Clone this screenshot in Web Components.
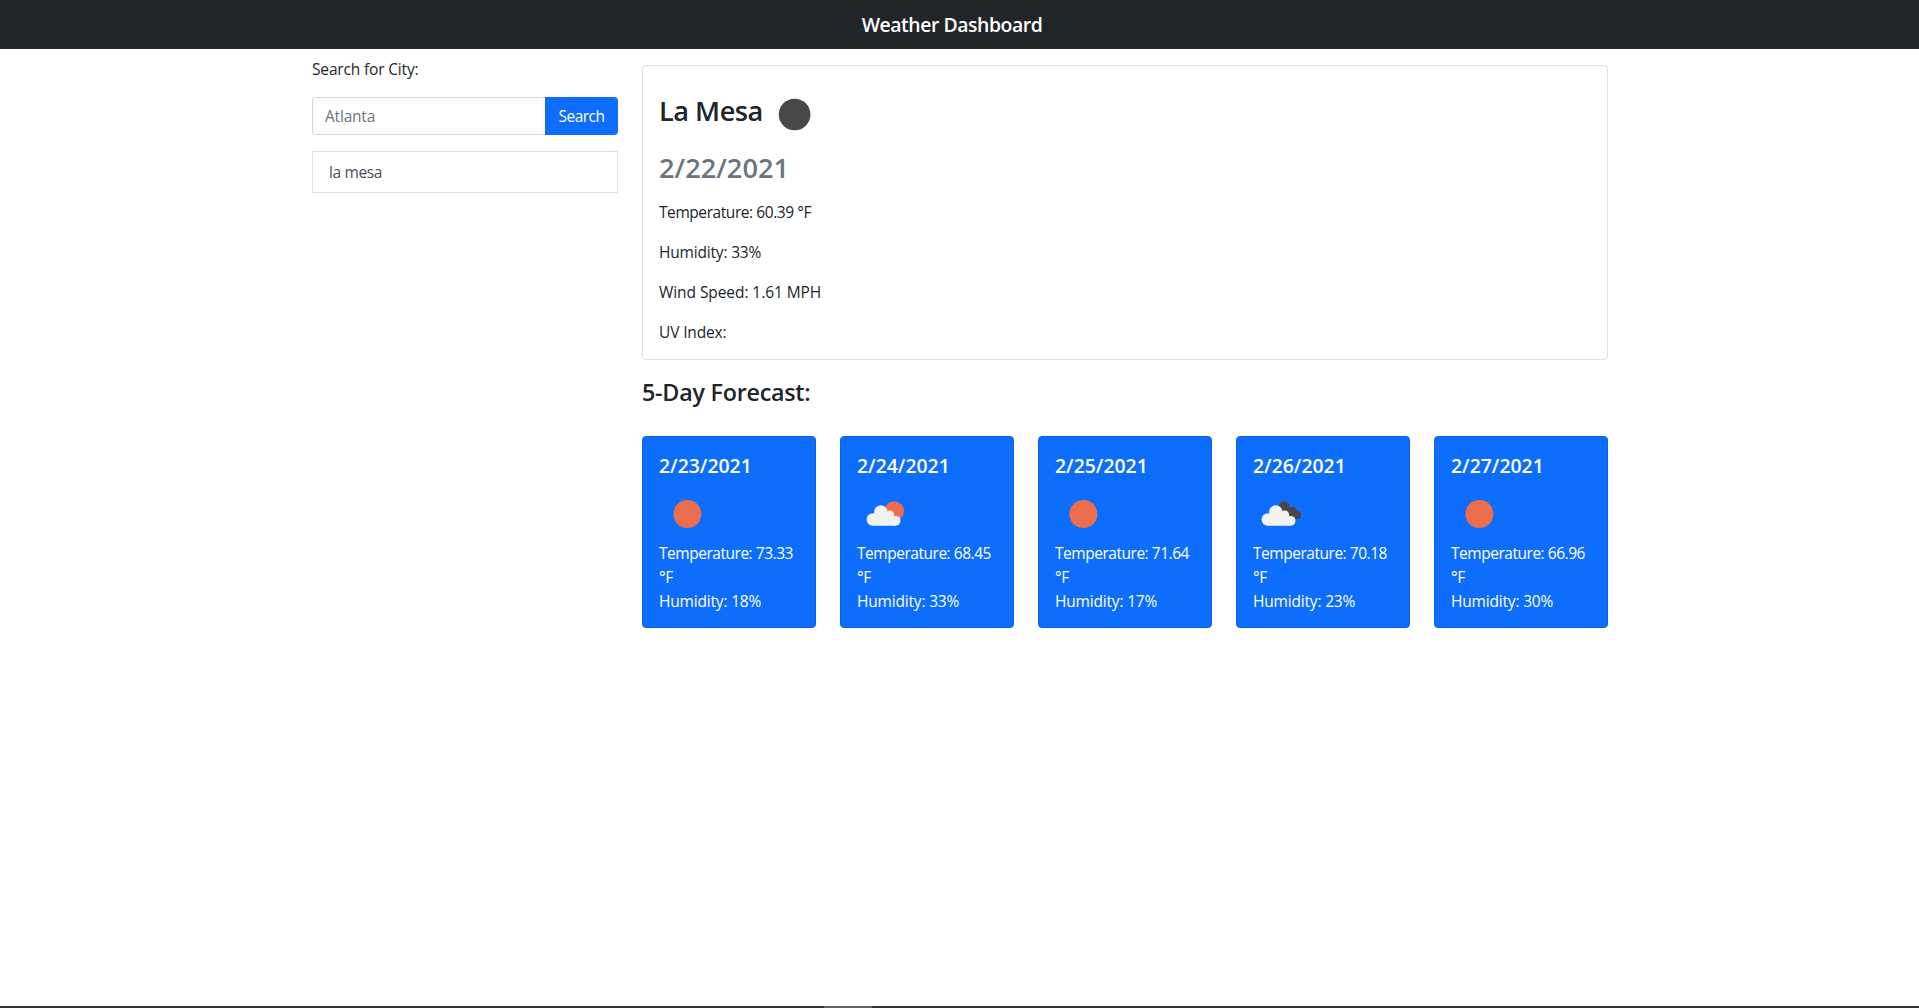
<!DOCTYPE html>
<html lang="en">
<head>
<meta charset="utf-8">
<title>Weather Dashboard</title>
<style>
  html, body { margin: 0; height: 100%; background: #fff; overflow: hidden; }
  body { font: 15.5px/24px "Open Sans", "Noto Sans", sans-serif; color: #212529; }
</style>
</head>
<body>
<weather-app></weather-app>
<script>
const define = (name, render) => customElements.define(name, class extends HTMLElement {
  connectedCallback() {
    if (this.shadowRoot) return;
    this.attachShadow({ mode: 'open' }).innerHTML = '<style>*{box-sizing:border-box}</style>' + render(this);
  }
});

const CLOUD = `<g fill="#f2f2f1"><circle cx="16.2" cy="30.5" r="6.2"/><circle cx="24.2" cy="23" r="6.7"/><circle cx="33.2" cy="25.8" r="4.4"/><circle cx="39" cy="31.8" r="4.9"/><path d="M16.2 36.7V27l3-3h14l6 5v7.7z"/></g>`;
const ICONS = {
  moon: `<circle cx="25" cy="25.5" r="15.8" fill="#48484a"/>`,
  sun: `<circle cx="28.8" cy="25" r="14" fill="#ec6e4c"/>`,
  'few-clouds': `<circle cx="37.6" cy="22.1" r="9.8" fill="#ec6e4c"/>${CLOUD}`,
  'broken-clouds': `<g transform="translate(-1)"><g fill="#48484a"><circle cx="32.8" cy="17.9" r="5.6"/><circle cx="41" cy="21.9" r="4.1"/><circle cx="45.7" cy="26.1" r="4.1"/><path d="M32 18l9 3 4 9h-4L30 22z"/></g>${CLOUD}</g>`
};

define('weather-icon', el => `
  <style>:host{display:block;width:50px;height:50px;flex:none} svg{display:block}</style>
  <svg width="50" height="50" viewBox=".4 0 50 50" aria-hidden="true">${ICONS[el.getAttribute('name')]}</svg>`);

define('app-header', () => `
  <style>
    :host{display:flex;height:49px;background:#212529;color:#fff;justify-content:center;align-items:center;padding-right:15px;padding-top:1px}
    h1{margin:0;font-size:19.4px;line-height:24px;font-weight:600;letter-spacing:-.44px}
  </style>
  <h1><slot></slot></h1>`);

define('city-search', () => `
  <style>
    :host{display:block;padding-top:8px}
    label{display:block;margin-bottom:16px;letter-spacing:-.16px}
    .group{display:flex;height:38px}
    .field{flex:1;border:1px solid #ced4da;border-right:0;border-radius:4px 0 0 4px;padding:6px 12px;line-height:24px;color:#6c757d;letter-spacing:-.2px}
    button{width:73px;padding:0;border:0;border-radius:0 4px 4px 0;background:#0d6efd;color:#fff;font:inherit;letter-spacing:-.55px}
  </style>
  <label>Search for City:</label>
  <div class="group"><div class="field">Atlanta</div><button>Search</button></div>
  <slot></slot>`);

define('history-item', () => `
  <style>:host{display:block;box-sizing:border-box;margin-top:16px;height:42px;border:1px solid #dfdfdf;padding:8px 16px;color:#495057;letter-spacing:-.38px}</style>
  <slot></slot>`);

define('current-weather', () => `
  <style>
    :host{display:block;box-sizing:border-box;height:295px;border:1px solid #dfdfdf;border-radius:4px;padding:16px}
    .city{display:flex;align-items:center;height:64px;margin-bottom:5px}
    h3{margin:0;font-size:27.2px;line-height:34px;font-weight:600}
    .city h3{letter-spacing:-.5px;margin-top:-7px}
    weather-icon{margin-left:7px}
    .date{color:#6c757d;margin-bottom:15px}
    p{margin:0 0 16px}
  </style>
  <div class="city"><h3>La Mesa</h3><weather-icon name="moon"></weather-icon></div>
  <h3 class="date">2/22/2021</h3>
  <p style="letter-spacing:-.43px">Temperature: 60.39 °F</p>
  <p style="letter-spacing:-.18px">Humidity: 33%</p>
  <p style="letter-spacing:-.07px">Wind Speed: 1.61 MPH</p>
  <p style="letter-spacing:-.14px">UV Index:</p>`);

define('forecast-card', el => `
  <style>
    :host{display:block;box-sizing:border-box;flex:1 1 0;height:192px;border:1px solid #0c63e4;border-radius:4px;background:#0d6efd;color:#fff;padding:17px 16px 15px}
    h5{margin:0 0 11px;font-size:19.4px;line-height:24px;font-weight:600}
    .t{letter-spacing:-.47px;margin-top:2px}
    .h{letter-spacing:-.18px}
  </style>
  <h5>${el.getAttribute('date')}</h5>
  <weather-icon name="${el.getAttribute('icon')}"></weather-icon>
  <div class="t">Temperature: ${el.getAttribute('temp')}<br>°F</div>
  <div class="h">Humidity: ${el.getAttribute('humidity')}%</div>`);

define('five-day-forecast', () => `
  <style>
    :host{display:block;margin-top:16px}
    h4{margin:0 0 28px;font-size:23.3px;line-height:32px;font-weight:600;letter-spacing:-.24px}
    .cards{display:flex;gap:24px}
  </style>
  <h4>5-Day Forecast:</h4>
  <div class="cards"><slot></slot></div>`);

define('taskbar-edge', () => `
  <style>:host{display:flex;height:2px;background:#333436} i{width:48px;margin-left:824px;background:#606163}</style><i></i>`);

define('weather-app', () => `
  <style>
    :host{display:flex;flex-direction:column;height:100vh}
    main{flex:1;display:flex;gap:24px;width:1296px;margin:0 0 0 312px}
    aside{width:306px;flex:none}
    section{flex:1;padding-top:16px}
  </style>
  <app-header>Weather Dashboard</app-header>
  <main>
    <aside><city-search><history-item>la mesa</history-item></city-search></aside>
    <section>
      <current-weather></current-weather>
      <five-day-forecast>
        <forecast-card date="2/23/2021" icon="sun" temp="73.33" humidity="18"></forecast-card>
        <forecast-card date="2/24/2021" icon="few-clouds" temp="68.45" humidity="33"></forecast-card>
        <forecast-card date="2/25/2021" icon="sun" temp="71.64" humidity="17"></forecast-card>
        <forecast-card date="2/26/2021" icon="broken-clouds" temp="70.18" humidity="23"></forecast-card>
        <forecast-card date="2/27/2021" icon="sun" temp="66.96" humidity="30"></forecast-card>
      </five-day-forecast>
    </section>
  </main>
  <taskbar-edge></taskbar-edge>`);
</script>
</body>
</html>
